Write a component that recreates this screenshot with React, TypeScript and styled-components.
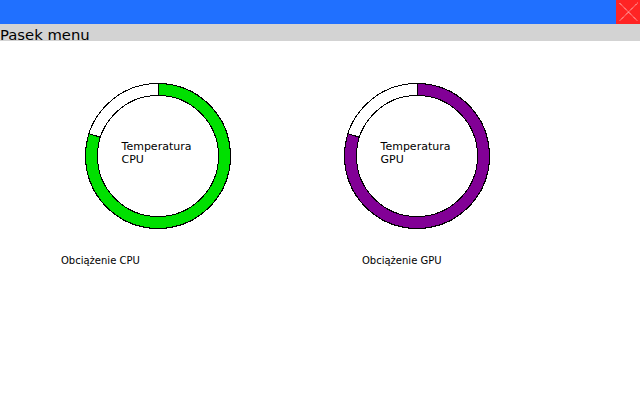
import React from "react";
import styled, { createGlobalStyle } from "styled-components";

const Global = createGlobalStyle`
  html, body { margin: 0; padding: 0; background: #ffffff; }
  #root { width: 640px; height: 400px; overflow: hidden; }
  * { box-sizing: border-box; }
`;

const Window = styled.div`
  width: 640px;
  height: 400px;
  display: flex;
  flex-direction: column;
  background: #ffffff;
  font-family: "DejaVu Sans", "Liberation Sans", sans-serif;
  color: #000000;
`;

const TitleBar = styled.div`
  height: 24px;
  flex: 0 0 24px;
  background: #2070ff;
  display: flex;
  justify-content: flex-end;
`;

const CloseButton = styled.div`
  width: 24px;
  height: 24px;
  background: #ff2424;
  display: flex;
`;

const MenuBar = styled.div`
  height: 17px;
  flex: 0 0 17px;
  background: #d3d3d3;
  font-size: 14.8px;
  line-height: 17px;
  padding-top: 2px;
  white-space: nowrap;
`;

const Content = styled.div`
  flex: 1;
  display: flex;
  padding: 41px 0 0 61px;
`;

const Column = styled.div<{ $width: number }>`
  width: ${(p) => p.$width}px;
  display: flex;
  flex-direction: column;
`;

const GaugeStack = styled.div<{ $indent: number }>`
  display: grid;
  width: 148px;
  height: 148px;
  margin-left: ${(p) => p.$indent}px;
  & > * {
    grid-area: 1 / 1;
  }
`;

const GaugeText = styled.div`
  align-self: center;
  justify-self: center;
  font-size: 11px;
  line-height: 13px;
  margin-bottom: 6px;
  margin-right: 3px;
  white-space: nowrap;
`;

const Label = styled.div<{ $indent: number }>`
  margin-top: 25px;
  margin-left: ${(p) => p.$indent}px;
  font-size: 10px;
  line-height: 12px;
  white-space: nowrap;
`;

function polar(cx: number, cy: number, r: number, deg: number) {
  const a = (deg * Math.PI) / 180;
  return [cx + r * Math.sin(a), cy - r * Math.cos(a)];
}

function Ring({ value, color }: { value: number; color: string }) {
  const c = 74;
  const R = 72.5;
  const r = 60.5;
  const deg = value * 360;
  const [x1, y1] = polar(c, c, R, deg);
  const [x2, y2] = polar(c, c, r, deg);
  const large = deg > 180 ? 1 : 0;
  const d = `M ${c} ${c - R} A ${R} ${R} 0 ${large} 1 ${x1} ${y1} L ${x2} ${y2} A ${r} ${r} 0 ${large} 0 ${c} ${c - r} Z`;
  return (
    <svg width="148" height="148" viewBox="0 0 148 148" shapeRendering="crispEdges">
      <circle cx={c} cy={c} r={R} fill="#ffffff" stroke="#000000" strokeWidth="1" />
      <path d={d} fill={color} stroke="#000000" strokeWidth="1" />
      <circle cx={c} cy={c} r={r} fill="#ffffff" stroke="#000000" strokeWidth="1" />
    </svg>
  );
}

function Gauge({
  title,
  label,
  color,
  value,
  ringIndent,
  labelIndent,
  width,
}: {
  title: string;
  label: string;
  color: string;
  value: number;
  ringIndent: number;
  labelIndent: number;
  width: number;
}) {
  return (
    <Column $width={width}>
      <GaugeStack $indent={ringIndent}>
        <Ring value={value} color={color} />
        <GaugeText>
          Temperatura
          <br />
          {title}
        </GaugeText>
      </GaugeStack>
      <Label $indent={labelIndent}>{label}</Label>
    </Column>
  );
}

export default function App() {
  return (
    <>
      <Global />
      <Window>
        <TitleBar>
          <CloseButton>
            <svg width="24" height="24" viewBox="0 0 24 24">
              <line x1="3.5" y1="3" x2="21.5" y2="21" stroke="#ffffff" strokeWidth="1" strokeDasharray="1 0.8" />
              <line x1="21.5" y1="3" x2="3.5" y2="21" stroke="#ffffff" strokeWidth="1" strokeDasharray="1 0.8" />
            </svg>
          </CloseButton>
        </TitleBar>
        <MenuBar>Pasek menu</MenuBar>
        <Content>
          <Gauge
            title="CPU"
            label="Obciążenie CPU"
            color="#00e000"
            value={0.8}
            ringIndent={23}
            labelIndent={0}
            width={282}
          />
          <Gauge
            title="GPU"
            label="Obciążenie GPU"
            color="#820096"
            value={0.8}
            ringIndent={0}
            labelIndent={19}
            width={200}
          />
        </Content>
      </Window>
    </>
  );
}
